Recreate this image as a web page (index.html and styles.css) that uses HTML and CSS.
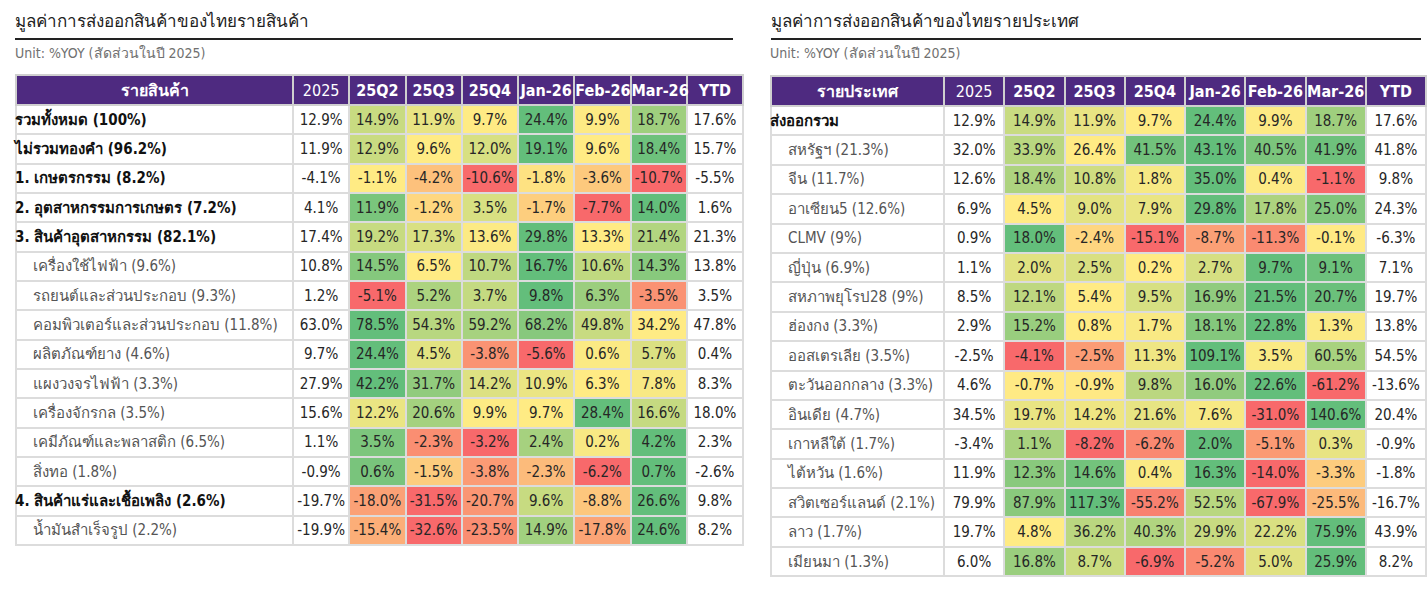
FILE: index.html
```html
<!DOCTYPE html>
<html lang="th">
<head>
<meta charset="utf-8">
<title>มูลค่าการส่งออกสินค้าของไทย</title>
<link rel="stylesheet" href="styles.css">
</head>
<body>
<main class="page">
  <section class="panel panel-product">
    <h2 class="panel-title">มูลค่าการส่งออกสินค้าของไทยรายสินค้า</h2>
    <p class="unit">Unit: %YOY (สัดส่วนในปี 2025)</p>
    <table class="grid grid-product">
      <colgroup><col class="c-label"><col span="8" class="c-num"></colgroup>
      <thead>
        <tr><th class="th-label">รายสินค้า</th><th class="th-plain">2025</th><th>25Q2</th><th>25Q3</th><th>25Q4</th><th>Jan-26</th><th>Feb-26</th><th>Mar-26</th><th>YTD</th></tr>
      </thead>
      <tbody>
        <tr class="main"><td class="lbl">รวมทั้งหมด (100%)</td><td>12.9%</td><td class="h">14.9%</td><td class="h">11.9%</td><td class="h">9.7%</td><td class="h">24.4%</td><td class="h">9.9%</td><td class="h">18.7%</td><td>17.6%</td></tr>
        <tr class="main"><td class="lbl">ไม่รวมทองคำ (96.2%)</td><td>11.9%</td><td class="h">12.9%</td><td class="h">9.6%</td><td class="h">12.0%</td><td class="h">19.1%</td><td class="h">9.6%</td><td class="h">18.4%</td><td>15.7%</td></tr>
        <tr class="main"><td class="lbl">1. เกษตรกรรม (8.2%)</td><td>-4.1%</td><td class="h">-1.1%</td><td class="h">-4.2%</td><td class="h">-10.6%</td><td class="h">-1.8%</td><td class="h">-3.6%</td><td class="h">-10.7%</td><td>-5.5%</td></tr>
        <tr class="main"><td class="lbl">2. อุตสาหกรรมการเกษตร (7.2%)</td><td>4.1%</td><td class="h">11.9%</td><td class="h">-1.2%</td><td class="h">3.5%</td><td class="h">-1.7%</td><td class="h">-7.7%</td><td class="h">14.0%</td><td>1.6%</td></tr>
        <tr class="main"><td class="lbl">3. สินค้าอุตสาหกรรม (82.1%)</td><td>17.4%</td><td class="h">19.2%</td><td class="h">17.3%</td><td class="h">13.6%</td><td class="h">29.8%</td><td class="h">13.3%</td><td class="h">21.4%</td><td>21.3%</td></tr>
        <tr class="sub"><td class="lbl">เครื่องใช้ไฟฟ้า (9.6%)</td><td>10.8%</td><td class="h">14.5%</td><td class="h">6.5%</td><td class="h">10.7%</td><td class="h">16.7%</td><td class="h">10.6%</td><td class="h">14.3%</td><td>13.8%</td></tr>
        <tr class="sub"><td class="lbl">รถยนต์และส่วนประกอบ (9.3%)</td><td>1.2%</td><td class="h">-5.1%</td><td class="h">5.2%</td><td class="h">3.7%</td><td class="h">9.8%</td><td class="h">6.3%</td><td class="h">-3.5%</td><td>3.5%</td></tr>
        <tr class="sub"><td class="lbl">คอมพิวเตอร์และส่วนประกอบ (11.8%)</td><td>63.0%</td><td class="h">78.5%</td><td class="h">54.3%</td><td class="h">59.2%</td><td class="h">68.2%</td><td class="h">49.8%</td><td class="h">34.2%</td><td>47.8%</td></tr>
        <tr class="sub"><td class="lbl">ผลิตภัณฑ์ยาง (4.6%)</td><td>9.7%</td><td class="h">24.4%</td><td class="h">4.5%</td><td class="h">-3.8%</td><td class="h">-5.6%</td><td class="h">0.6%</td><td class="h">5.7%</td><td>0.4%</td></tr>
        <tr class="sub"><td class="lbl">แผงวงจรไฟฟ้า (3.3%)</td><td>27.9%</td><td class="h">42.2%</td><td class="h">31.7%</td><td class="h">14.2%</td><td class="h">10.9%</td><td class="h">6.3%</td><td class="h">7.8%</td><td>8.3%</td></tr>
        <tr class="sub"><td class="lbl">เครื่องจักรกล (3.5%)</td><td>15.6%</td><td class="h">12.2%</td><td class="h">20.6%</td><td class="h">9.9%</td><td class="h">9.7%</td><td class="h">28.4%</td><td class="h">16.6%</td><td>18.0%</td></tr>
        <tr class="sub"><td class="lbl">เคมีภัณฑ์และพลาสติก (6.5%)</td><td>1.1%</td><td class="h">3.5%</td><td class="h">-2.3%</td><td class="h">-3.2%</td><td class="h">2.4%</td><td class="h">0.2%</td><td class="h">4.2%</td><td>2.3%</td></tr>
        <tr class="sub"><td class="lbl">สิ่งทอ (1.8%)</td><td>-0.9%</td><td class="h">0.6%</td><td class="h">-1.5%</td><td class="h">-3.8%</td><td class="h">-2.3%</td><td class="h">-6.2%</td><td class="h">0.7%</td><td>-2.6%</td></tr>
        <tr class="main"><td class="lbl">4. สินค้าแร่และเชื้อเพลิง (2.6%)</td><td>-19.7%</td><td class="h">-18.0%</td><td class="h">-31.5%</td><td class="h">-20.7%</td><td class="h">9.6%</td><td class="h">-8.8%</td><td class="h">26.6%</td><td>9.8%</td></tr>
        <tr class="sub"><td class="lbl">น้ำมันสำเร็จรูป (2.2%)</td><td>-19.9%</td><td class="h">-15.4%</td><td class="h">-32.6%</td><td class="h">-23.5%</td><td class="h">14.9%</td><td class="h">-17.8%</td><td class="h">24.6%</td><td>8.2%</td></tr>
      </tbody>
    </table>
  </section>

  <section class="panel panel-country">
    <h2 class="panel-title">มูลค่าการส่งออกสินค้าของไทยรายประเทศ</h2>
    <p class="unit">Unit: %YOY (สัดส่วนในปี 2025)</p>
    <table class="grid grid-country">
      <colgroup><col class="c-label"><col span="8" class="c-num"></colgroup>
      <thead>
        <tr><th class="th-label">รายประเทศ</th><th class="th-plain">2025</th><th>25Q2</th><th>25Q3</th><th>25Q4</th><th>Jan-26</th><th>Feb-26</th><th>Mar-26</th><th>YTD</th></tr>
      </thead>
      <tbody>
        <tr class="main"><td class="lbl">ส่งออกรวม</td><td>12.9%</td><td class="h">14.9%</td><td class="h">11.9%</td><td class="h">9.7%</td><td class="h">24.4%</td><td class="h">9.9%</td><td class="h">18.7%</td><td>17.6%</td></tr>
        <tr class="sub"><td class="lbl">สหรัฐฯ (21.3%)</td><td>32.0%</td><td class="h">33.9%</td><td class="h">26.4%</td><td class="h">41.5%</td><td class="h">43.1%</td><td class="h">40.5%</td><td class="h">41.9%</td><td>41.8%</td></tr>
        <tr class="sub"><td class="lbl">จีน (11.7%)</td><td>12.6%</td><td class="h">18.4%</td><td class="h">10.8%</td><td class="h">1.8%</td><td class="h">35.0%</td><td class="h">0.4%</td><td class="h">-1.1%</td><td>9.8%</td></tr>
        <tr class="sub"><td class="lbl">อาเซียน5 (12.6%)</td><td>6.9%</td><td class="h">4.5%</td><td class="h">9.0%</td><td class="h">7.9%</td><td class="h">29.8%</td><td class="h">17.8%</td><td class="h">25.0%</td><td>24.3%</td></tr>
        <tr class="sub"><td class="lbl">CLMV (9%)</td><td>0.9%</td><td class="h">18.0%</td><td class="h">-2.4%</td><td class="h">-15.1%</td><td class="h">-8.7%</td><td class="h">-11.3%</td><td class="h">-0.1%</td><td>-6.3%</td></tr>
        <tr class="sub"><td class="lbl">ญี่ปุ่น (6.9%)</td><td>1.1%</td><td class="h">2.0%</td><td class="h">2.5%</td><td class="h">0.2%</td><td class="h">2.7%</td><td class="h">9.7%</td><td class="h">9.1%</td><td>7.1%</td></tr>
        <tr class="sub"><td class="lbl">สหภาพยุโรป28 (9%)</td><td>8.5%</td><td class="h">12.1%</td><td class="h">5.4%</td><td class="h">9.5%</td><td class="h">16.9%</td><td class="h">21.5%</td><td class="h">20.7%</td><td>19.7%</td></tr>
        <tr class="sub"><td class="lbl">ฮ่องกง (3.3%)</td><td>2.9%</td><td class="h">15.2%</td><td class="h">0.8%</td><td class="h">1.7%</td><td class="h">18.1%</td><td class="h">22.8%</td><td class="h">1.3%</td><td>13.8%</td></tr>
        <tr class="sub"><td class="lbl">ออสเตรเลีย (3.5%)</td><td>-2.5%</td><td class="h">-4.1%</td><td class="h">-2.5%</td><td class="h">11.3%</td><td class="h">109.1%</td><td class="h">3.5%</td><td class="h">60.5%</td><td>54.5%</td></tr>
        <tr class="sub"><td class="lbl">ตะวันออกกลาง (3.3%)</td><td>4.6%</td><td class="h">-0.7%</td><td class="h">-0.9%</td><td class="h">9.8%</td><td class="h">16.0%</td><td class="h">22.6%</td><td class="h">-61.2%</td><td>-13.6%</td></tr>
        <tr class="sub"><td class="lbl">อินเดีย (4.7%)</td><td>34.5%</td><td class="h">19.7%</td><td class="h">14.2%</td><td class="h">21.6%</td><td class="h">7.6%</td><td class="h">-31.0%</td><td class="h">140.6%</td><td>20.4%</td></tr>
        <tr class="sub"><td class="lbl">เกาหลีใต้ (1.7%)</td><td>-3.4%</td><td class="h">1.1%</td><td class="h">-8.2%</td><td class="h">-6.2%</td><td class="h">2.0%</td><td class="h">-5.1%</td><td class="h">0.3%</td><td>-0.9%</td></tr>
        <tr class="sub"><td class="lbl">ไต้หวัน (1.6%)</td><td>11.9%</td><td class="h">12.3%</td><td class="h">14.6%</td><td class="h">0.4%</td><td class="h">16.3%</td><td class="h">-14.0%</td><td class="h">-3.3%</td><td>-1.8%</td></tr>
        <tr class="sub"><td class="lbl">สวิตเซอร์แลนด์ (2.1%)</td><td>79.9%</td><td class="h">87.9%</td><td class="h">117.3%</td><td class="h">-55.2%</td><td class="h">52.5%</td><td class="h">-67.9%</td><td class="h">-25.5%</td><td>-16.7%</td></tr>
        <tr class="sub"><td class="lbl">ลาว (1.7%)</td><td>19.7%</td><td class="h">4.8%</td><td class="h">36.2%</td><td class="h">40.3%</td><td class="h">29.9%</td><td class="h">22.2%</td><td class="h">75.9%</td><td>43.9%</td></tr>
        <tr class="sub"><td class="lbl">เมียนมา (1.3%)</td><td>6.0%</td><td class="h">16.8%</td><td class="h">8.7%</td><td class="h">-6.9%</td><td class="h">-5.2%</td><td class="h">5.0%</td><td class="h">25.9%</td><td>8.2%</td></tr>
      </tbody>
    </table>
  </section>
</main>
<script src="script.js"></script>
</body>
</html>
```

FILE: styles.css
```css
html, body {
  margin: 0;
  padding: 0;
  background: #ffffff;
}

body {
  font-family: "DejaVu Sans Condensed", "DejaVu Sans", sans-serif;
  color: #222222;
}

.page {
  display: flex;
  align-items: flex-start;
  gap: 28px;
  padding: 9px 0 0 15px;
}

.panel-product { width: 727px; }
.panel-country { width: 655px; }

.panel-title {
  margin: 0;
  font-size: 17px;
  font-weight: normal;
  line-height: 24px;
  padding-bottom: 5px;
  border-bottom: 2px solid #222222;
  color: #222222;
}

.panel-product .panel-title { margin-right: 9px; }
.panel-country .panel-title { margin-left: 1px; margin-right: 4px; }

.unit {
  margin: 4px 0 0 0;
  font-size: 14px;
  line-height: 18px;
  color: #707070;
}

.grid {
  border-collapse: collapse;
  table-layout: fixed;
  margin-top: 12px;
  width: 100%;
}

.grid-country { margin-top: 13px; }

.grid-product .c-label { width: 277px; }
.grid-product .c-num { width: 56.25px; }
.grid-country .c-label { width: 173px; }
.grid-country .c-num { width: 60.25px; }

.grid th,
.grid td {
  border: 2px solid #dcdcdc;
  padding: 0;
  text-align: center;
  white-space: nowrap;
  overflow: visible;
}

.grid th {
  background: #4e2a80;
  color: #ffffff;
  font-size: 16px;
  font-weight: bold;
  height: 28px;
  border-color: #cfcfcf;
}

.grid th.th-plain { font-weight: normal; }

.grid td {
  font-size: 15px;
  color: #262626;
}

.grid-product td { height: 27.35px; }
.grid-country td { height: 27.4px; }

.grid td.lbl {
  text-align: left;
  font-size: 15px;
}

.main td.lbl {
  font-weight: bold;
  color: #111111;
  text-indent: -2px;
}

.sub td.lbl {
  color: #555555;
  padding-left: 16px;
}
```

FILE: script.js
```js
(function () {
  var RED = [248, 105, 107];
  var YEL = [255, 235, 132];
  var GRN = [99, 190, 123];
  function mix(a, b, t) {
    return 'rgb(' + a.map(function (v, i) { return Math.round(v + (b[i] - v) * t); }).join(',') + ')';
  }
  document.querySelectorAll('.grid tbody tr').forEach(function (row) {
    var cells = Array.prototype.slice.call(row.querySelectorAll('td.h'));
    var vals = cells.map(function (c) { return parseFloat(c.textContent); });
    var min = Math.min.apply(null, vals);
    var max = Math.max.apply(null, vals);
    var mid = Math.min(Math.max(0, min), max);
    cells.forEach(function (c, i) {
      var v = vals[i];
      var col;
      if (v <= mid) {
        col = mix(YEL, RED, mid === min ? 0 : (mid - v) / (mid - min));
      } else {
        col = mix(YEL, GRN, max === mid ? 0 : (v - mid) / (max - mid));
      }
      c.style.backgroundColor = col;
    });
  });
})();
```
